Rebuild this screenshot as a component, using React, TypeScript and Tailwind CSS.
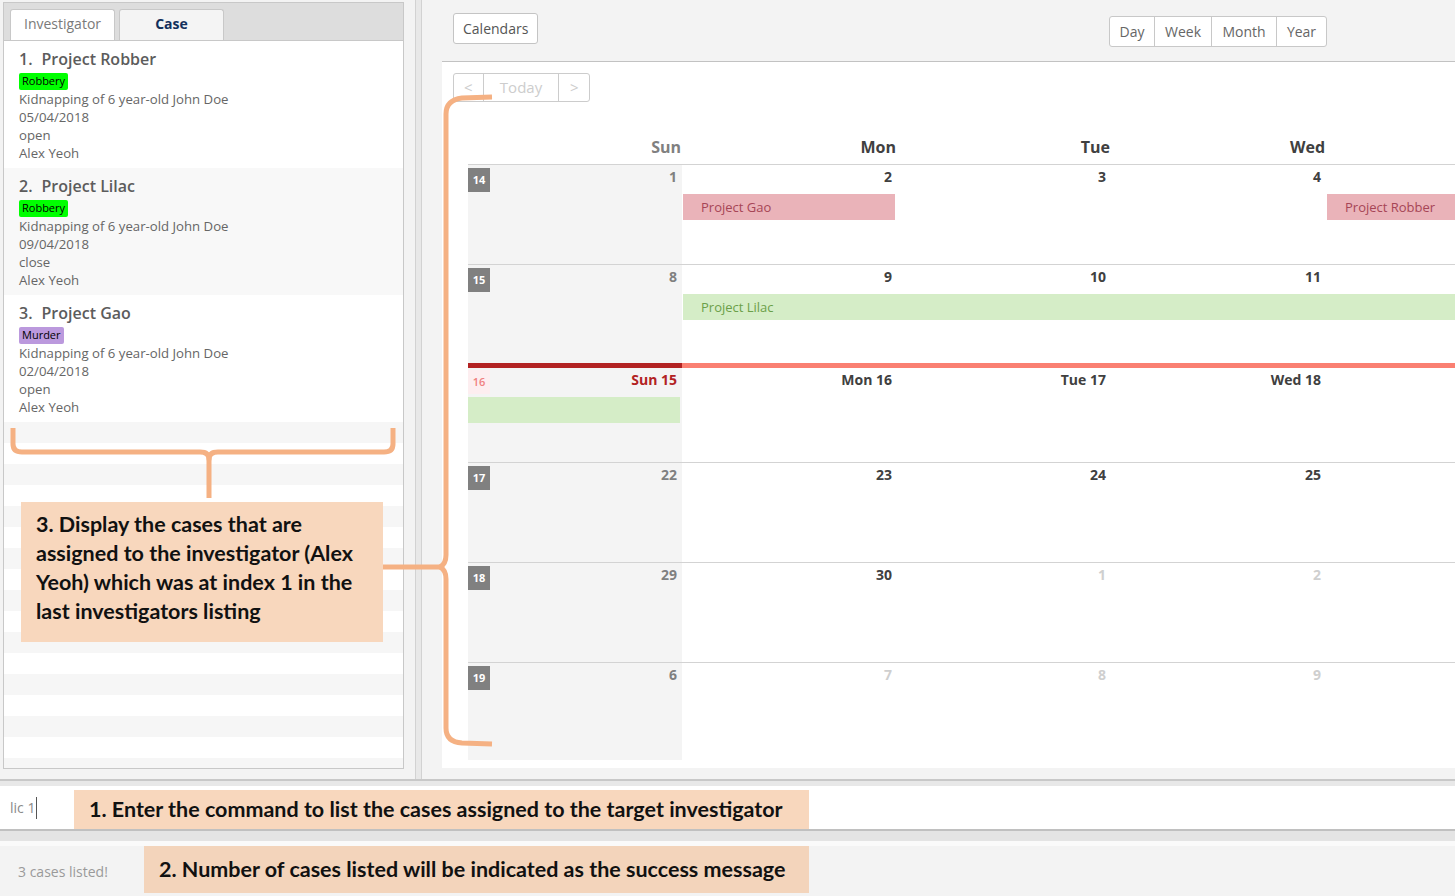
import React from "react";

type Ev = { text?: string; kind: "pink" | "green"; full?: boolean };
type Cell = { num: string; tone: "sun" | "cur" | "next" | "today"; badge?: string; ev?: Ev };

const rows: { h: string; border: string; cells: Cell[] }[] = [
  {
    h: "h-[99px]",
    border: "",
    cells: [
      { num: "1", tone: "sun", badge: "14" },
      { num: "2", tone: "cur", ev: { text: "Project Gao", kind: "pink" } },
      { num: "3", tone: "cur" },
      { num: "4", tone: "cur" },
      { num: "", tone: "cur", ev: { text: "Project Robber", kind: "pink" } },
    ],
  },
  {
    h: "h-[99px]",
    border: "border-t border-[#d3d3d3]",
    cells: [
      { num: "8", tone: "sun", badge: "15" },
      { num: "9", tone: "cur", ev: { text: "Project Lilac", kind: "green", full: true } },
      { num: "10", tone: "cur", ev: { kind: "green", full: true } },
      { num: "11", tone: "cur", ev: { kind: "green", full: true } },
      { num: "", tone: "cur", ev: { kind: "green", full: true } },
    ],
  },
  {
    h: "h-[99px]",
    border: "",
    cells: [
      { num: "Sun 15", tone: "today", badge: "16", ev: { kind: "green" } },
      { num: "Mon 16", tone: "cur" },
      { num: "Tue 17", tone: "cur" },
      { num: "Wed 18", tone: "cur" },
      { num: "", tone: "cur" },
    ],
  },
  {
    h: "h-[100px]",
    border: "border-t border-[#d3d3d3]",
    cells: [
      { num: "22", tone: "sun", badge: "17" },
      { num: "23", tone: "cur" },
      { num: "24", tone: "cur" },
      { num: "25", tone: "cur" },
      { num: "", tone: "cur" },
    ],
  },
  {
    h: "h-[100px]",
    border: "border-t border-[#d3d3d3]",
    cells: [
      { num: "29", tone: "sun", badge: "18" },
      { num: "30", tone: "cur" },
      { num: "1", tone: "next" },
      { num: "2", tone: "next" },
      { num: "", tone: "next" },
    ],
  },
  {
    h: "h-[98px]",
    border: "border-t border-[#d3d3d3]",
    cells: [
      { num: "6", tone: "sun", badge: "19" },
      { num: "7", tone: "next" },
      { num: "8", tone: "next" },
      { num: "9", tone: "next" },
      { num: "", tone: "next" },
    ],
  },
];

const numColor: Record<Cell["tone"], string> = {
  sun: "text-[#808080]",
  cur: "text-[#404040]",
  next: "text-[#cfcfcf]",
  today: "text-[#b22222]",
};

function CalCell({ c, rowIdx, colIdx }: { c: Cell; rowIdx: number; colIdx: number }) {
  const sun = colIdx === 0;
  const redTop =
    rowIdx === 2 ? (sun ? "border-t-[5px] border-[#b22222]" : "border-t-[5px] border-[#fa8072]") : "";
  let bar: React.ReactNode = null;
  if (c.ev) {
    const color =
      c.ev.kind === "pink" ? "bg-[#eab3b9] text-[#a64556]" : "bg-[#d5edc7] text-[#6b9f49]";
    const margin = c.ev.full ? (colIdx === 1 ? "ml-[1px]" : "") : sun ? "mr-[2px]" : "ml-[1px] mr-[2px]";
    bar = (
      <div className={`h-[26px] ${margin} ${color} flex items-center pl-[18px] text-[13px] leading-[18px]`}>
        {c.ev.text ?? ""}
      </div>
    );
  }
  return (
    <div className={`flex flex-col ${sun ? "bg-[#f4f4f4]" : ""} ${redTop}`}>
      <div className="flex h-[29px] items-start pr-[5px]">
        {c.badge && (
          <div
            className={`flex h-[24px] w-[22px] items-center justify-center text-[11px] ${
              rowIdx === 2
                ? "mt-[2px] bg-[#fdeef0] font-semibold text-[#f08080]"
                : "mt-[3px] bg-[#808080] font-bold text-white"
            }`}
          >
            {c.badge}
          </div>
        )}
        {c.num && (
          <div className={`ml-auto pt-[3px] text-[14px] font-bold leading-[18px] ${numColor[c.tone]}`}>{c.num}</div>
        )}
      </div>
      {bar}
    </div>
  );
}

const cases = [
  {
    n: "1.",
    title: "Project Robber",
    tag: "Robbery",
    tagCls: "bg-[#00ff00]",
    desc: "Kidnapping of 6 year-old John Doe",
    date: "05/04/2018",
    status: "open",
    who: "Alex Yeoh",
  },
  {
    n: "2.",
    title: "Project Lilac",
    tag: "Robbery",
    tagCls: "bg-[#00ff00]",
    desc: "Kidnapping of 6 year-old John Doe",
    date: "09/04/2018",
    status: "close",
    who: "Alex Yeoh",
  },
  {
    n: "3.",
    title: "Project Gao",
    tag: "Murder",
    tagCls: "bg-[#bb99dd]",
    desc: "Kidnapping of 6 year-old John Doe",
    date: "02/04/2018",
    status: "open",
    who: "Alex Yeoh",
  },
];

const gridCols = "grid grid-cols-[214px_215px_214px_215px_214px]";

export default function App() {
  return (
    <div className="relative h-[896px] w-[1455px] overflow-hidden bg-[#f3f3f3] font-['Open_Sans',sans-serif]">
      <div className="flex h-[779px]">
        {/* Left panel */}
        <div className="w-[404px] shrink-0 pl-[3px] pt-[2px]">
          <div className="flex h-[767px] flex-col overflow-hidden border border-[#c8c8c8] bg-white">
            <div className="flex h-[38px] shrink-0 items-end gap-[4px] border-b border-[#c8c8c8] bg-[#dddddd] pl-[6px]">
              <div className="flex h-[31px] w-[105px] items-center justify-center rounded-t-[3px] border border-b-0 border-[#c8c8c8] bg-white pb-[3px] text-[14px] text-[#7a7a7a]">
                Investigator
              </div>
              <div className="flex h-[31px] w-[105px] items-center justify-center rounded-t-[3px] border border-b-0 border-[#c8c8c8] bg-[#f4f4f4] pb-[3px] text-[14px] font-bold text-[#12305c]">
                Case
              </div>
            </div>
            <div className="flex flex-col">
              {cases.map((c, i) => (
                <div
                  key={i}
                  className={`flex h-[127px] flex-col px-[15px] pt-[8px] ${i % 2 === 1 ? "bg-[#f8f8f8]" : "bg-white"}`}
                >
                  <div className="flex h-[20px] items-center text-[16px] font-semibold text-[#5c5c5c]">
                    <span>{c.n}</span>
                    <span className="ml-[9px]">{c.title}</span>
                  </div>
                  <div className="mt-[4px] flex">
                    <span
                      className={`flex h-[17px] items-center rounded-[2px] px-[3px] text-[11px] text-black ${c.tagCls}`}
                    >
                      {c.tag}
                    </span>
                  </div>
                  <div className="text-[13.2px] leading-[18px] text-[#666666]">
                    <div>{c.desc}</div>
                    <div>{c.date}</div>
                    <div>{c.status}</div>
                    <div>{c.who}</div>
                  </div>
                </div>
              ))}
              {Array.from({ length: 17 }).map((_, i) => (
                <div key={i} className={`h-[21px] shrink-0 ${i % 2 === 0 ? "bg-[#f6f6f6]" : "bg-white"}`} />
              ))}
            </div>
          </div>
        </div>

        {/* Divider */}
        <div className="flex w-[38px] shrink-0">
          <div className="w-[11px]" />
          <div className="h-full w-[7px] border-x border-[#d2d2d2] bg-[#e8e8e8]" />
        </div>

        {/* Right panel */}
        <div className="flex min-w-0 flex-1 flex-col">
          <div className="flex h-[62px] shrink-0 items-start border-b border-[#c2c2c2] bg-[#f3f3f3]">
            <div className="ml-[11px] mt-[13px] flex h-[31px] items-center rounded-[3px] border border-[#c4c4c4] bg-white px-[9px] text-[14px] text-[#555555]">
              Calendars
            </div>
            <div className="ml-auto mr-[128px] mt-[16px] flex h-[31px] overflow-hidden rounded-[3px] border border-[#c8c8c8] bg-white text-[14px] text-[#666666]">
              <div className="flex w-[45px] items-center justify-center border-r border-[#c8c8c8]">Day</div>
              <div className="flex w-[57px] items-center justify-center border-r border-[#c8c8c8]">Week</div>
              <div className="flex w-[65px] items-center justify-center border-r border-[#c8c8c8]">Month</div>
              <div className="flex w-[49px] items-center justify-center">Year</div>
            </div>
          </div>
          <div className="h-[706px] shrink-0 overflow-hidden bg-white pt-[11px]">
            <div className="ml-[11px] flex h-[29px] w-[137px] overflow-hidden rounded-[3px] border border-[#cccccc] text-[15px] text-[#cdcdcd]">
              <div className="flex w-[30px] items-center justify-center border-r border-[#cccccc]">&lt;</div>
              <div className="flex w-[77px] items-center justify-center border-r border-[#cccccc]">Today</div>
              <div className="flex w-[30px] items-center justify-center">&gt;</div>
            </div>
            <div className="ml-[26px] mt-[30px] w-[1072px]">
              <div className={`${gridCols} h-[33px] border-b border-[#d3d3d3]`}>
                {["Sun", "Mon", "Tue", "Wed", ""].map((d, i) => (
                  <div
                    key={i}
                    className={`flex items-end justify-end pb-[7px] pr-[1px] text-[16px] font-bold leading-[20px] ${
                      i === 0 ? "text-[#808080]" : "text-[#404040]"
                    }`}
                  >
                    {d}
                  </div>
                ))}
              </div>
              {rows.map((r, ri) => (
                <div key={ri} className={`${gridCols} ${r.h} ${r.border}`}>
                  {r.cells.map((c, ci) => (
                    <CalCell key={ci} c={c} rowIdx={ri} colIdx={ci} />
                  ))}
                </div>
              ))}
            </div>
          </div>
        </div>
      </div>

      {/* bottom */}
      <div className="h-[2px] bg-[#c8c8c8]" />
      <div className="h-[5px] bg-[#e8e8e8]" />
      <div className="flex h-[43px] items-center bg-white pl-[10px] text-[14px] text-[#8a8a8a]">
        <span>lic 1</span>
        <span className="ml-[1px] h-[22px] w-[1px] bg-[#555555]" />
      </div>
      <div className="h-[2px] bg-[#c0c0c0]" />
      <div className="h-[10px] bg-[#e4e4e4]" />
      <div className="h-[5px] bg-[#fafafa]" />
      <div className="flex h-[50px] items-center bg-[#f3f3f3] pl-[18px] text-[14px] text-[#9a9a9a]">
        3 cases listed!
      </div>

      {/* annotation boxes */}
      <div className="absolute left-[21px] top-[502px] h-[140px] w-[362px] bg-[#f8d7bd] pl-[15px] pt-[8px] font-['Lato',sans-serif] text-[21.5px] font-bold leading-[29px] text-[#111111]">
        3. Display the cases that are
        <br />
        assigned to the investigator (Alex
        <br />
        Yeoh) which was at index 1 in the
        <br />
        last investigators listing
      </div>
      <div className="absolute left-[74px] top-[790px] flex h-[39px] w-[735px] items-center bg-[#f8d7bd] pl-[15px] font-['Lato',sans-serif] text-[21.5px] font-bold text-[#111111]">
        1. Enter the command to list the cases assigned to the target investigator
      </div>
      <div className="absolute left-[144px] top-[846px] flex h-[47px] w-[665px] items-center bg-[#f3d4bb] pl-[15px] font-['Lato',sans-serif] text-[21.5px] font-bold text-[#111111]">
        2. Number of cases listed will be indicated as the success message
      </div>

      {/* brackets */}
      <svg
        className="pointer-events-none absolute left-0 top-0"
        width="1455"
        height="896"
        viewBox="0 0 1455 896"
        fill="none"
      >
        <g stroke="#f5b183" strokeWidth="5" strokeLinecap="butt" strokeLinejoin="round">
          <path d="M 13 428 L 13 444 Q 13 452 22 452 L 200 452 Q 209 452 209 459 Q 209 452 218 452 L 384 452 Q 393 452 393 444 L 393 428" />
          <path d="M 209 456 L 209 498" />
          <path d="M 492 97 L 462 98 Q 446 100 446 114 L 446 555 Q 446 564 440 567 Q 446 570 446 579 L 446 728 Q 446 742 462 743 L 492 744" />
          <path d="M 383 567 L 442 567" />
        </g>
      </svg>
    </div>
  );
}
